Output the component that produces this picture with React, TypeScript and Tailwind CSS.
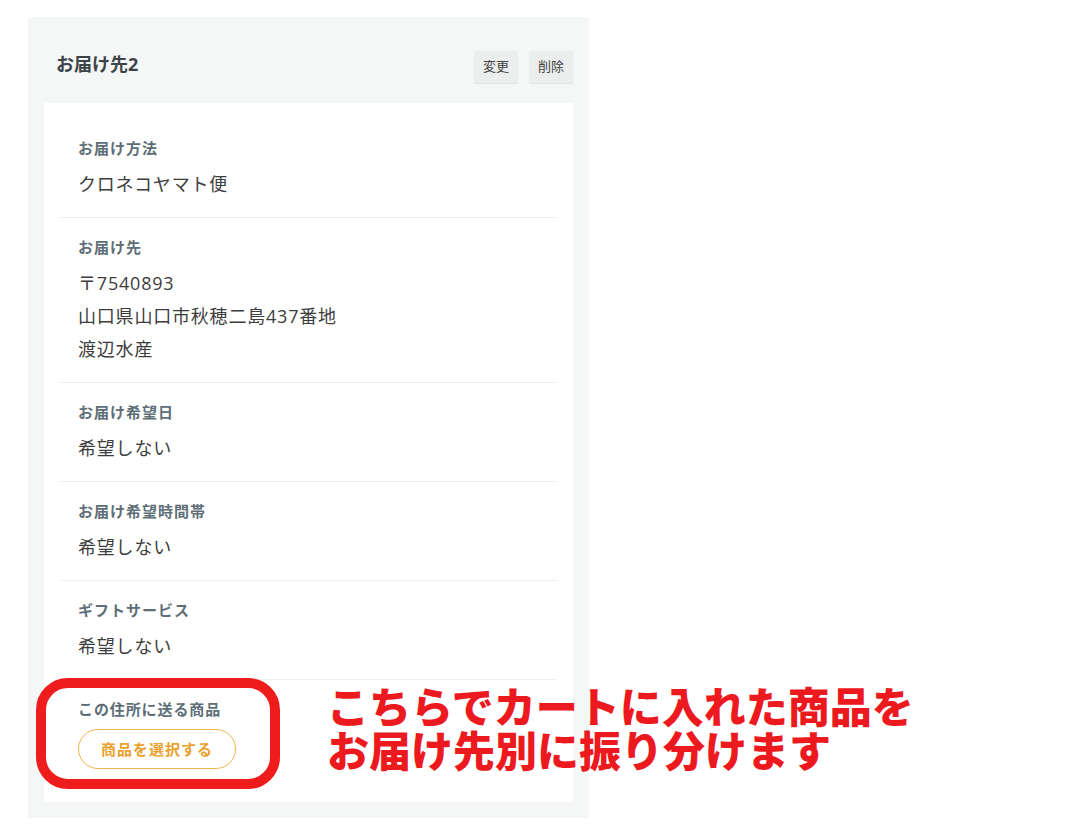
import React from "react";

const jp = { fontFamily: '"Open Sans", "Noto Sans CJK JP", sans-serif' };

function Row({ label, children, last }: { label: string; children: React.ReactNode; last?: boolean }) {
  return (
    <div className={`px-[18px] pt-[19px] pb-[16px] ${last ? "" : "border-b border-[#eef0f1]"}`}>
      <div className="text-[15px] leading-[20px] font-bold text-[#5d6e77] tracking-[1px]">{label}</div>
      <div className="mt-[10px] text-[18px] leading-[33px] text-[#3d3d3d] tracking-[0.8px]">{children}</div>
    </div>
  );
}

export default function App() {
  return (
    <div className="relative w-[1080px] h-[840px] bg-white" style={jp}>
      <div className="pt-[17px] pl-[28px]">
        <div className="w-[561px] bg-[#f5f7f7] px-[16px] pt-[34px] pb-[16px]">
          <div className="flex items-center justify-between pl-[12px] mb-[20px] h-[32px]">
            <div className="text-[18px] leading-[26px] font-bold text-[#3c4449] pb-[6px]">お届け先2</div>
            <div className="flex gap-[11px]">
              <button className="w-[44px] h-[32px] bg-[#eceeee] rounded-[2px] shadow-[0_1px_1px_rgba(0,0,0,0.08)] text-[13px] text-[#444]">変更</button>
              <button className="w-[44px] h-[32px] bg-[#eceeee] rounded-[2px] shadow-[0_1px_1px_rgba(0,0,0,0.08)] text-[13px] text-[#444]">削除</button>
            </div>
          </div>
          <div className="bg-white px-[16px] pt-[16px] pb-[16px]">
            <Row label="お届け方法">クロネコヤマト便</Row>
            <Row label="お届け先">
              <div>〒7540893</div>
              <div>山口県山口市秋穂二島437番地</div>
              <div>渡辺水産</div>
            </Row>
            <Row label="お届け希望日">希望しない</Row>
            <Row label="お届け希望時間帯">希望しない</Row>
            <Row label="ギフトサービス">希望しない</Row>
            <div className="px-[18px] pt-[19px] pb-[17px]">
              <div className="text-[15px] leading-[20px] font-bold text-[#5d6e77] tracking-[0.9px]">この住所に送る商品</div>
              <button className="mt-[10px] w-[158px] h-[40px] rounded-full border border-[#efb54a] text-[15px] font-bold text-[#eba12e] bg-white tracking-[1px]">
                商品を選択する
              </button>
            </div>
          </div>
        </div>
      </div>

      <div className="absolute left-[36px] top-[678px] w-[244px] h-[111px] border-[10px] border-[#ee1c1c] rounded-[32px]" />
      <div
        className="absolute left-[327px] top-[683px] text-[42px] leading-[44px] font-black text-[#ec1a1e] whitespace-nowrap"
        style={{ fontFamily: '"Noto Sans CJK JP", sans-serif' }}
      >
        <div>こちらでカートに入れた商品を</div>
        <div>お届け先別に振り分けます</div>
      </div>
    </div>
  );
}
